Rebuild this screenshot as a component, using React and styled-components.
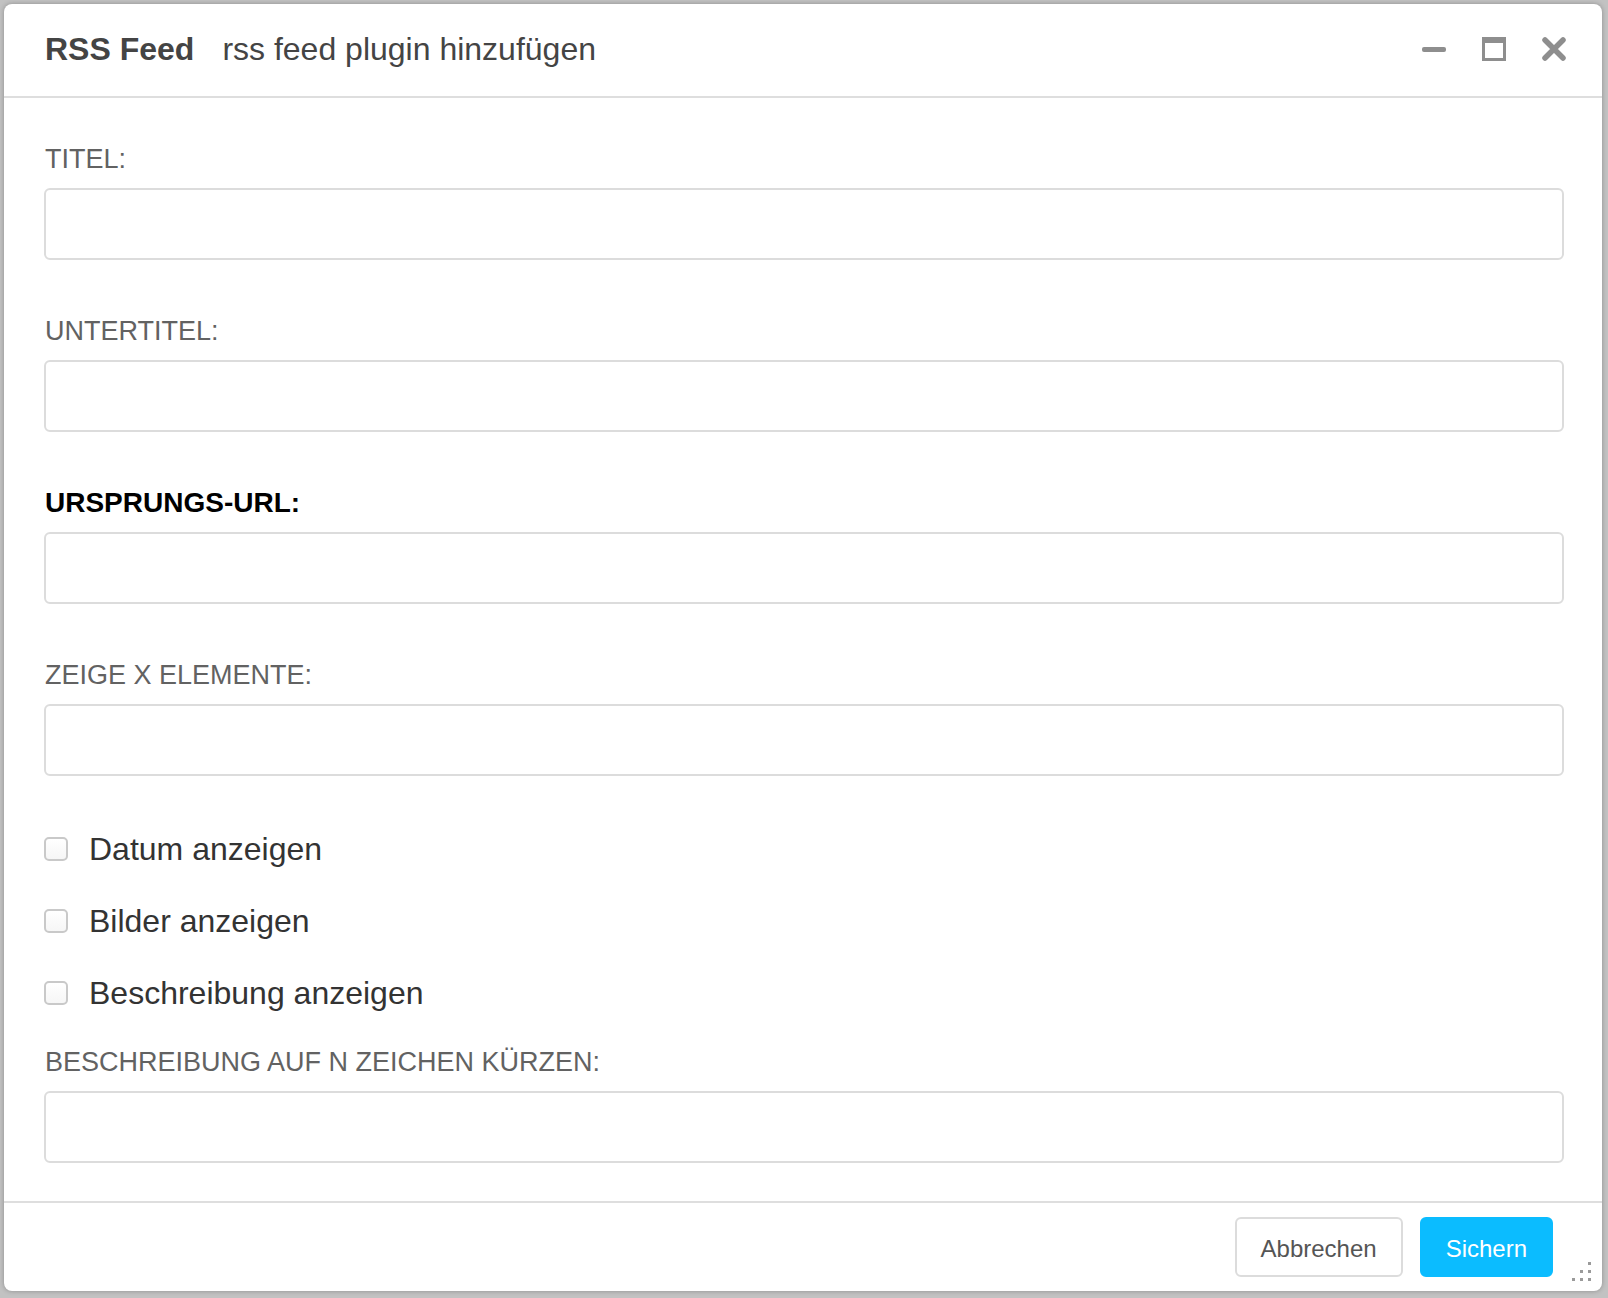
//? IMPORT
//! Modules
import React from 'react'
import styled, { createGlobalStyle } from 'styled-components'

//! Content
const FIELDS_TOP = [
    { id: 'titel', label: 'Titel:' },
    { id: 'untertitel', label: 'Untertitel:' },
    { id: 'url', label: 'Ursprungs-URL:', required: true },
    { id: 'anzahl', label: 'Zeige x Elemente:' }
]
const CHECKS = ['Datum anzeigen', 'Bilder anzeigen', 'Beschreibung anzeigen']

//! Styles
const GlobalStyle = createGlobalStyle`
    html, body {
        margin: 0;
        padding: 0;
        background: #c2c2c2;
    }
    body {
        font-family: 'Liberation Sans', Arial, Helvetica, sans-serif;
        -webkit-font-smoothing: antialiased;
    }
    * {
        box-sizing: border-box;
    }
`
const Window = styled.div`
    position: relative;
    display: flex;
    flex-direction: column;
    width: 1598px;
    height: 1287px;
    margin: 4px 6px 7px 4px;
    background: #fff;
    border-radius: 8px;
    box-shadow: 0 0 5px rgba(0, 0, 0, 0.28);
    overflow: hidden;
`
const Header = styled.header`
    display: flex;
    align-items: center;
    height: 94px;
    padding: 0 36px 2px 41px;
    border-bottom: 2px solid #dedede;
    color: #444;
    font-size: 32px;
`
const Title = styled.h1`
    margin: 0;
    font-size: 32px;
    font-weight: bold;
`
const Subtitle = styled.span`
    margin-left: 28px;
`
const Controls = styled.div`
    display: flex;
    align-items: center;
    gap: 36px;
    margin-left: auto;
    color: #8e8e8e;
`
const Minimize = styled.span`
    display: block;
    width: 24px;
    height: 5px;
    border-radius: 2px;
    background: currentColor;
`
const Maximize = styled.span`
    display: block;
    width: 24px;
    height: 24px;
    border: 3px solid currentColor;
    border-top-width: 6px;
`
const Body = styled.main`
    flex: 1;
    padding: 46px 38px 0 40px;
`
const Field = styled.div`
    margin-top: ${({ $gap }) => $gap}px;
`
const Label = styled.label`
    display: block;
    margin: 0 0 14px 1px;
    line-height: 30px;
    font-size: ${({ $required }) => ($required ? 28 : 27)}px;
    font-weight: ${({ $required }) => ($required ? 'bold' : 'normal')};
    color: ${({ $required }) => ($required ? '#000' : '#626262')};
    text-transform: uppercase;
`
const Input = styled.input`
    display: block;
    width: 100%;
    height: 72px;
    padding: 0 16px;
    border: 2px solid #dcdcdc;
    border-radius: 6px;
    background: #fff;
    font: inherit;
    font-size: 26px;
    outline: none;
`
const CheckList = styled.div`
    display: flex;
    flex-direction: column;
    gap: 24px;
    margin-top: 49px;
`
const CheckRow = styled.label`
    display: flex;
    align-items: center;
    height: 48px;
    color: #333;
    font-size: 32px;
`
const Box = styled.span`
    flex: none;
    width: 24px;
    height: 24px;
    margin-right: 21px;
    border: 2px solid #c9c9c9;
    border-radius: 5px;
    background: linear-gradient(#fff, #f6f6f6);
`
const Footer = styled.footer`
    position: relative;
    display: flex;
    align-items: center;
    justify-content: flex-end;
    gap: 17px;
    height: 90px;
    padding: 0 49px 0 0;
    border-top: 2px solid #dedede;
`
const Button = styled.button`
    height: 60px;
    padding: 3px 24px 0;
    border: 2px solid ${({ $primary }) => ($primary ? '#0bbcff' : '#dcdcdc')};
    border-radius: 6px;
    background: ${({ $primary }) => ($primary ? '#0bbcff' : '#fff')};
    color: ${({ $primary }) => ($primary ? '#fff' : '#555')};
    font-family: inherit;
    font-size: 24px;
    cursor: pointer;
`
const Grip = styled.svg`
    position: absolute;
    right: 10px;
    bottom: 9px;
`

//! Components
const CloseIcon = () => (
    <svg width="24" height="24" viewBox="0 0 24 24">
        <path
            d="M3 3 L21 21 M21 3 L3 21"
            stroke="currentColor"
            strokeWidth="5.5"
            strokeLinecap="round"
        />
    </svg>
)

//? EXPORT
const App = () => (
    <>
        <GlobalStyle />
        <Window>
            <Header>
                <Title>RSS Feed</Title>
                <Subtitle>rss feed plugin hinzufügen</Subtitle>
                <Controls>
                    <Minimize />
                    <Maximize />
                    <CloseIcon />
                </Controls>
            </Header>
            <Body>
                {FIELDS_TOP.map((f, i) => (
                    <Field key={f.id} $gap={i === 0 ? 0 : 56}>
                        <Label htmlFor={f.id} $required={f.required}>
                            {f.label}
                        </Label>
                        <Input id={f.id} type="text" />
                    </Field>
                ))}
                <CheckList>
                    {CHECKS.map(c => (
                        <CheckRow key={c}>
                            <Box />
                            {c}
                        </CheckRow>
                    ))}
                </CheckList>
                <Field $gap={30}>
                    <Label htmlFor="kuerzen">
                        Beschreibung auf n Zeichen kürzen:
                    </Label>
                    <Input id="kuerzen" type="text" />
                </Field>
            </Body>
            <Footer>
                <Button>Abbrechen</Button>
                <Button $primary>Sichern</Button>
                <Grip width="20" height="20" viewBox="0 0 20 20" fill="#9a9a9a">
                    <rect x="16" y="0" width="3" height="3" />
                    <rect x="8" y="8" width="3" height="3" />
                    <rect x="16" y="8" width="3" height="3" />
                    <rect x="0" y="16" width="3" height="3" />
                    <rect x="8" y="16" width="3" height="3" />
                    <rect x="16" y="16" width="3" height="3" />
                </Grip>
            </Footer>
        </Window>
    </>
)

export default App
